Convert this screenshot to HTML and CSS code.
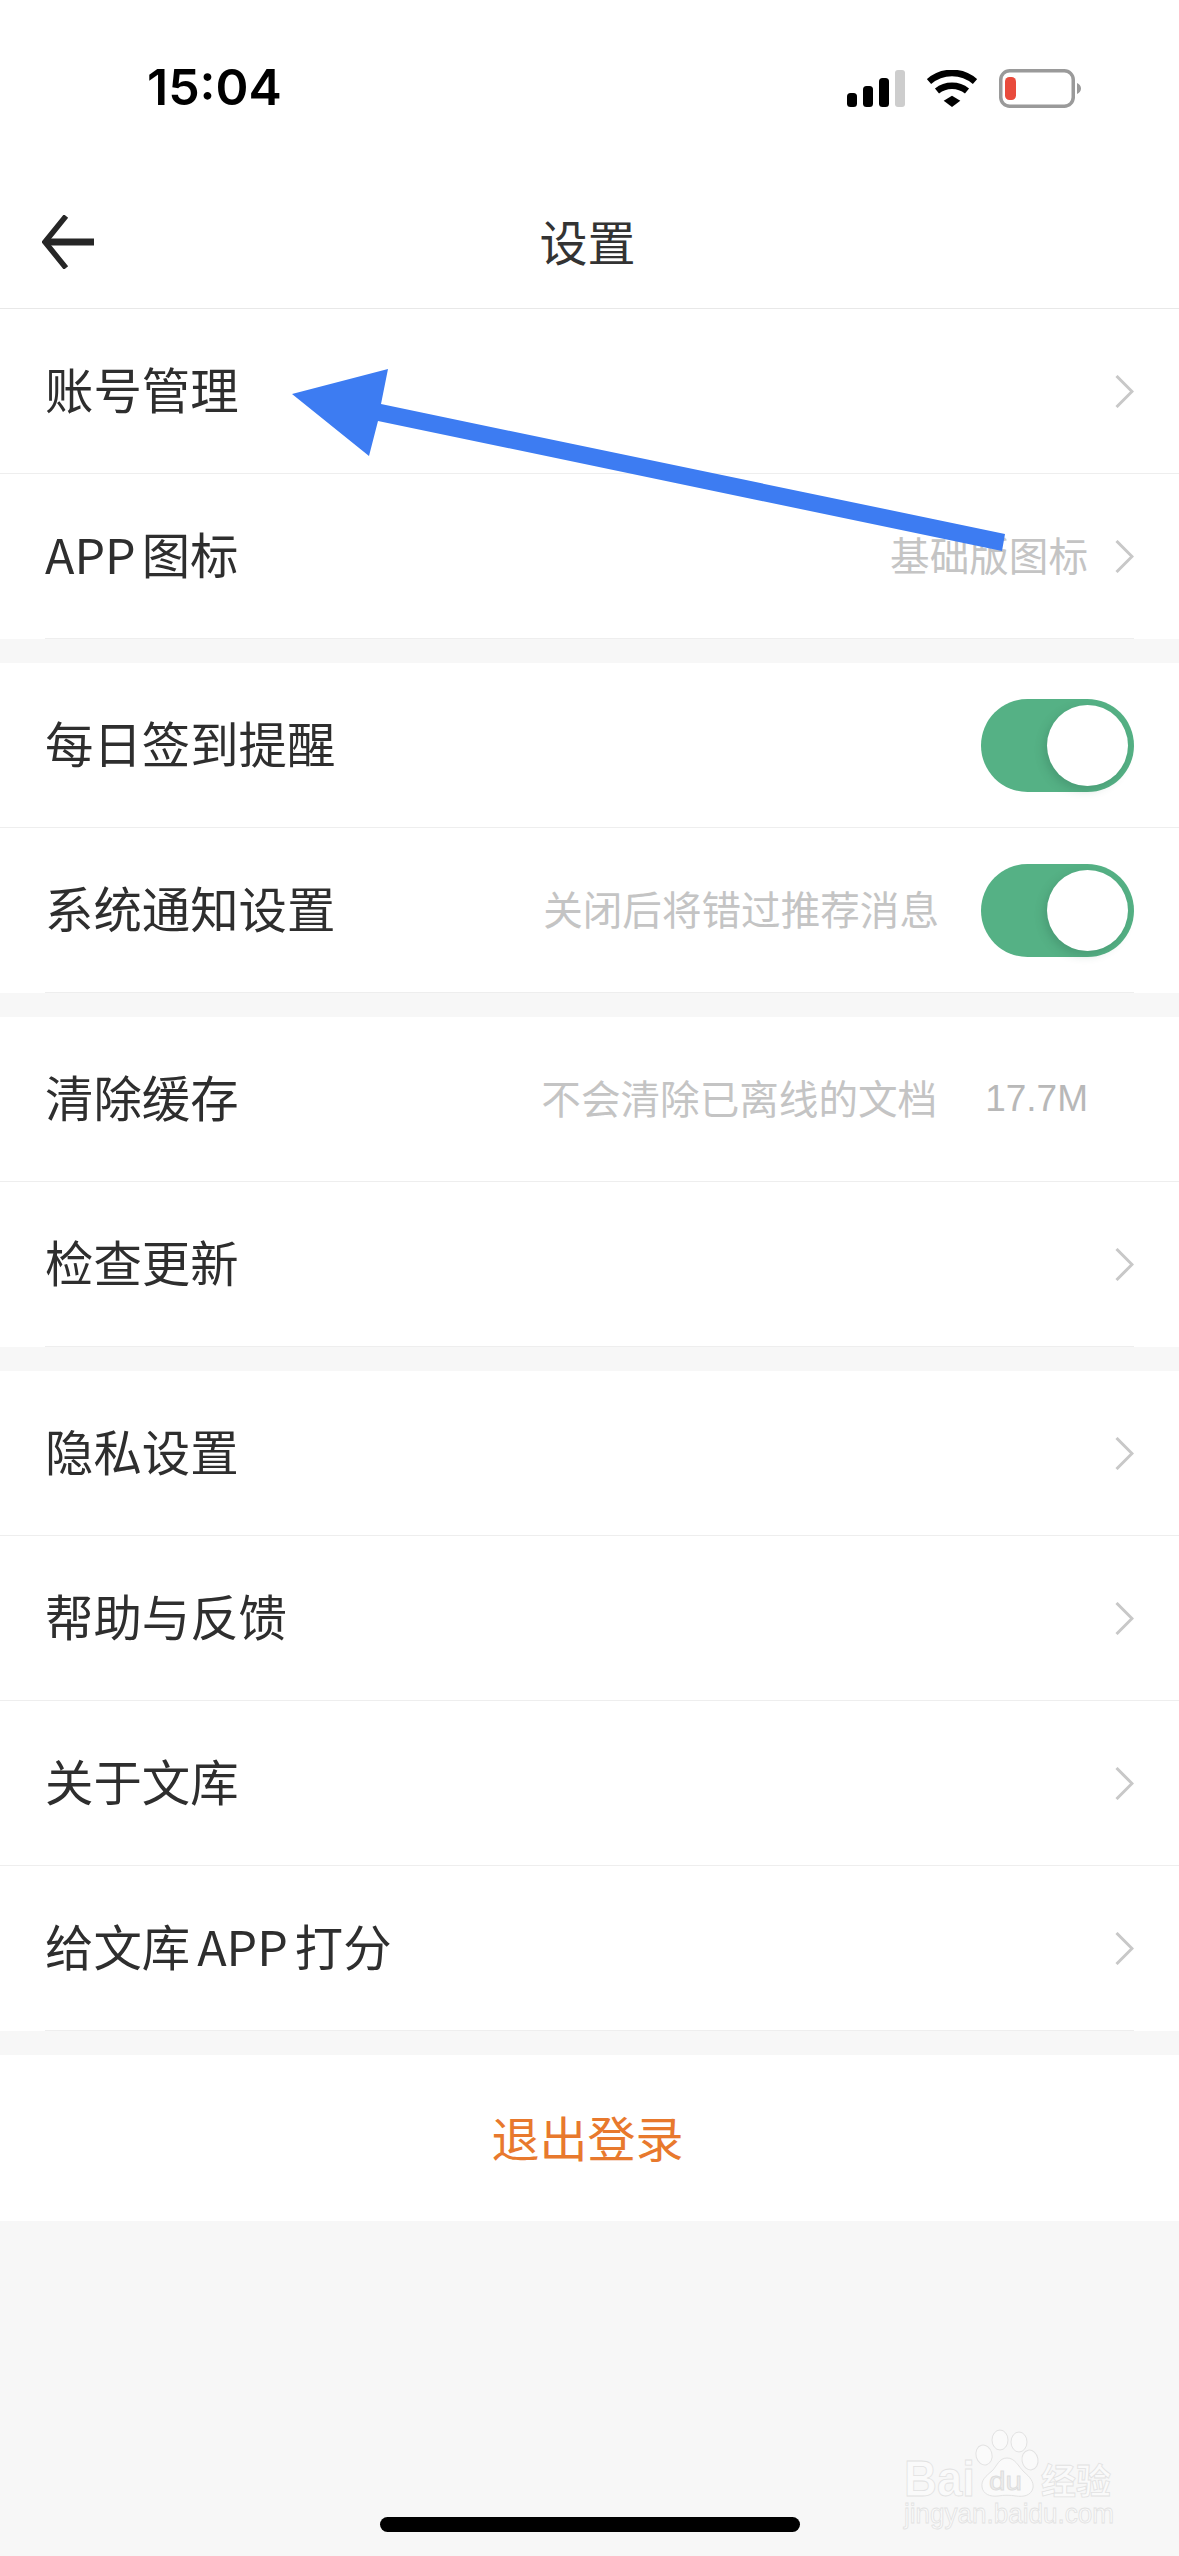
FILE: index.html
```html
<!DOCTYPE html>
<html lang="zh-CN">
<head>
    <meta charset="UTF-8">
    <meta name="viewport" content="width=device-width, initial-scale=1.0">
    <title>设置</title>
    <link rel="stylesheet" href="styles.css">
</head>
<body>
    <header class="top">
        <div class="status-bar">
            <span class="time">15:04</span>
            <div class="status-icons">
                <svg class="signal" width="58" height="37" viewBox="0 0 58 37">
                    <rect x="0" y="23" width="10" height="14" rx="3.5" fill="#000"/>
                    <rect x="16" y="16" width="10" height="21" rx="3.5" fill="#000"/>
                    <rect x="32" y="8" width="10" height="29" rx="3.5" fill="#000"/>
                    <rect x="48" y="0" width="10" height="37" rx="3" fill="#cdcdcd"/>
                </svg>
                <svg class="wifi" width="50" height="37" viewBox="0 0 50 37">
                    <path d="M2 11.5 A35 35 0 0 1 48 11.5" fill="none" stroke="#000" stroke-width="6.5"/>
                    <path d="M10 21 A24 24 0 0 1 40 21" fill="none" stroke="#000" stroke-width="6.5"/>
                    <path d="M16.7 30.7 L25 25.7 L33.3 30.7 L25 37 Z" fill="#000"/>
                </svg>
                <svg class="battery" width="82" height="39" viewBox="0 0 82 39">
                    <rect x="1.75" y="1.75" width="72.5" height="35.5" rx="9" fill="#fff" stroke="#9a9a9a" stroke-width="3.5"/>
                    <rect x="6" y="8" width="11" height="23" rx="4.5" fill="#e94b3c"/>
                    <path d="M78 14 C80.5 15 82 17 82 19.5 C82 22 80.5 24 78 25 Z" fill="#9a9a9a"/>
                </svg>
            </div>
        </div>
        <nav class="nav-bar">
            <svg class="back" width="52" height="54" viewBox="0 0 52 54">
                <path d="M24 1 L3 27 L24 53" fill="none" stroke="#262626" stroke-width="5.5"/>
                <path d="M4 27 H52" fill="none" stroke="#262626" stroke-width="7"/>
            </svg>
            <h1 class="nav-title">设置</h1>
        </nav>
    </header>

    <main>
        <section class="group">
            <div class="row">
                <span class="row-title">账号管理</span>
                <svg class="chevron" width="19" height="33" viewBox="0 0 19 33"><path d="M1.5 1 L17 16.5 L1.5 32" /></svg>
            </div>
            <div class="row">
                <span class="row-title"><span class="latin latin-start">APP</span>图标</span>
                <span class="row-note row-note-link">基础版图标</span>
                <svg class="chevron" width="19" height="33" viewBox="0 0 19 33"><path d="M1.5 1 L17 16.5 L1.5 32" /></svg>
            </div>
        </section>

        <section class="group">
            <div class="row">
                <span class="row-title">每日签到提醒</span>
                <span class="switch"><span class="switch-knob"></span></span>
            </div>
            <div class="row">
                <span class="row-title">系统通知设置</span>
                <span class="row-note row-note-switch">关闭后将错过推荐消息</span>
                <span class="switch"><span class="switch-knob"></span></span>
            </div>
        </section>

        <section class="group">
            <div class="row">
                <span class="row-title">清除缓存</span>
                <span class="row-note row-note-size">不会清除已离线的文档</span>
                <span class="row-value">17.7M</span>
            </div>
            <div class="row">
                <span class="row-title">检查更新</span>
                <svg class="chevron" width="19" height="33" viewBox="0 0 19 33"><path d="M1.5 1 L17 16.5 L1.5 32" /></svg>
            </div>
        </section>

        <section class="group">
            <div class="row">
                <span class="row-title">隐私设置</span>
                <svg class="chevron" width="19" height="33" viewBox="0 0 19 33"><path d="M1.5 1 L17 16.5 L1.5 32" /></svg>
            </div>
            <div class="row">
                <span class="row-title">帮助与反馈</span>
                <svg class="chevron" width="19" height="33" viewBox="0 0 19 33"><path d="M1.5 1 L17 16.5 L1.5 32" /></svg>
            </div>
            <div class="row">
                <span class="row-title">关于文库</span>
                <svg class="chevron" width="19" height="33" viewBox="0 0 19 33"><path d="M1.5 1 L17 16.5 L1.5 32" /></svg>
            </div>
            <div class="row">
                <span class="row-title">给文库<span class="latin">APP</span>打分</span>
                <svg class="chevron" width="19" height="33" viewBox="0 0 19 33"><path d="M1.5 1 L17 16.5 L1.5 32" /></svg>
            </div>
        </section>

        <div class="logout">退出登录</div>
    </main>

    <div class="home-indicator"></div>

    <!-- annotation drawn over the screenshot -->
    <svg class="annotation" width="1179" height="600" viewBox="0 0 1179 600">
        <polygon fill="#3d7cf2" points="292,394 388,369 381,404 1005,534 1002,551 378,421 369,456"/>
    </svg>

    <svg class="watermark" width="230" height="125" viewBox="895 2425 230 125">
        <ellipse class="wm-shape" cx="1000" cy="2440" rx="8" ry="10"/>
        <ellipse class="wm-shape" cx="1019" cy="2442" rx="8" ry="10"/>
        <ellipse class="wm-shape" cx="984" cy="2455" rx="8" ry="10" transform="rotate(-15 984 2455)"/>
        <ellipse class="wm-shape" cx="1030" cy="2460" rx="8" ry="10" transform="rotate(-10 1030 2460)"/>
        <path class="wm-shape" d="M1007 2458 C1015 2458 1018 2466 1024 2472 C1030 2477 1034 2482 1033 2488 C1031 2496 1023 2497 1016 2496 C1010 2495 1004 2495 998 2496 C990 2497 983 2494 982 2487 C981 2480 986 2476 992 2471 C997 2466 999 2458 1007 2458 Z"/>
        <text class="wm-text wm-bold" x="904" y="2496" font-size="50" textLength="71" lengthAdjust="spacingAndGlyphs">Bai</text>
        <text class="wm-text wm-du" x="989" y="2490" font-size="26" textLength="33" lengthAdjust="spacingAndGlyphs">du</text>
        <text class="wm-text wm-bold" x="1041" y="2494" font-size="35">经验</text>
        <text class="wm-text" x="904" y="2523" font-size="27" textLength="210" lengthAdjust="spacingAndGlyphs">jingyan.baidu.com</text>
    </svg>
</body>
</html>
```

FILE: styles.css
```css
* {
    box-sizing: border-box;
}

body {
    position: relative;
    width: 1179px;
    height: 2556px;
    margin: 0;
    overflow: hidden;
    background-color: #f7f7f7;
    color: #2e2e2e;
    font-family: "Noto Sans CJK SC", "Liberation Sans", sans-serif;
}

.top {
    background: #fff;
    border-bottom: 1px solid #e8e8e8;
    height: 309px;
}

.status-bar {
    display: flex;
    justify-content: space-between;
    align-items: center;
    height: 176px;
    padding: 0 98px 0 147px;
}

.time {
    padding-bottom: 3px;
    font-family: Inter, "Liberation Sans", sans-serif;
    font-size: 50px;
    font-weight: 600;
    color: #000;
}

.status-icons {
    display: flex;
    align-items: center;
    gap: 22px;
}

.nav-bar {
    position: relative;
    display: flex;
    align-items: center;
    justify-content: center;
    height: 132px;
    padding: 0 4px 4px 0;
}

.back {
    position: absolute;
    left: 42px;
    top: 39px;
}

.nav-title {
    margin: 0;
    font-size: 48px;
    font-weight: 400;
    line-height: 1;
    color: #333;
}

.group {
    margin-bottom: 24px;
    background: #fff;
}

.group::after {
    content: "";
    display: block;
    height: 1px;
    margin: 0 45px;
    background: #eee;
}

.row {
    display: flex;
    align-items: center;
    height: 165px;
    padding: 0 45px 0 45px;
    border-bottom: 1px solid #eee;
}

.row:last-child {
    height: 164px;
    border-bottom: none;
}

.row-title {
    margin-bottom: 5px;
    font-size: 48.4px;
    line-height: 1;
    white-space: nowrap;
}

.latin {
    margin: 0 7px;
}

.latin-start {
    margin: 0 6px 0 0;
}

.row-note {
    margin-left: auto;
    margin-bottom: 4px;
    font-size: 39.6px;
    line-height: 1;
    color: #c4c4c4;
}

.row-note-link {
    margin-right: 27px;
}

.row-note-switch {
    margin-right: 42px;
}

.row-note-size {
    margin-right: 48px;
}

.row-value {
    margin-right: 46px;
    margin-bottom: 2px;
    font-family: "Liberation Sans", sans-serif;
    font-size: 37px;
    line-height: 1;
    color: #b8b8b8;
}

.chevron {
    margin-left: auto;
    fill: none;
    stroke: #c8c8c8;
    stroke-width: 3;
}

.row-note + .chevron {
    margin-left: 0;
}

.switch {
    display: flex;
    align-items: center;
    justify-content: flex-end;
    width: 153px;
    height: 93px;
    margin-left: auto;
    padding-right: 6px;
    border-radius: 47px;
    background: #55b185;
}

.row-note + .switch {
    margin-left: 0;
}

.switch-knob {
    width: 81px;
    height: 81px;
    border-radius: 50%;
    background: #fff;
    box-shadow: -3px 4px 10px rgba(40, 90, 70, 0.25);
}

.logout {
    display: flex;
    align-items: center;
    justify-content: center;
    height: 166px;
    padding: 0 4px 5px 0;
    background: #fff;
    font-size: 48px;
    color: #e8792d;
}

.home-indicator {
    position: absolute;
    left: 380px;
    top: 2517px;
    width: 420px;
    height: 15px;
    border-radius: 8px;
    background: #000;
}

.annotation {
    position: absolute;
    left: 0;
    top: 0;
}

.watermark {
    position: absolute;
    left: 895px;
    top: 2425px;
}

.wm-shape {
    fill: #fafafa;
    stroke: #e2e2e2;
    stroke-width: 1;
}

.wm-text {
    fill: #fafafa;
    stroke: #e2e2e2;
    stroke-width: 0.8;
    font-family: "Liberation Sans", "Noto Sans CJK SC", sans-serif;
}

.wm-bold {
    font-weight: 700;
}

.wm-du {
    fill: #ececec;
    stroke: #dcdcdc;
}
```
